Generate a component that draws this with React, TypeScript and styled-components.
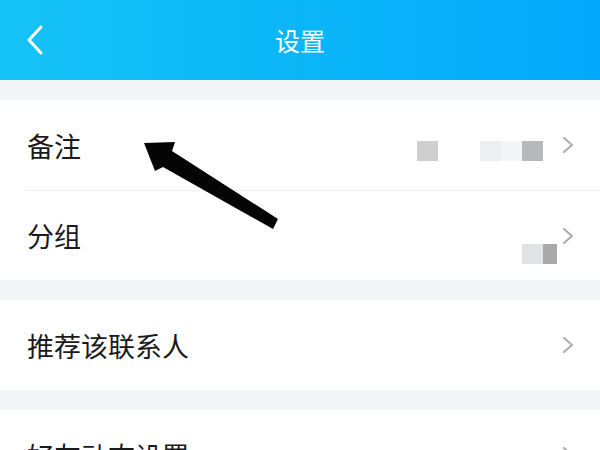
import React from 'react'
import styled, { createGlobalStyle } from 'styled-components'

const GlobalStyle = createGlobalStyle`
  html, body {
    margin: 0;
    padding: 0;
    background: #ffffff;
  }
  body {
    font-family: 'Noto Sans CJK SC', 'Noto Sans', sans-serif;
  }
`

const Screen = styled.div`
  position: relative;
  width: 600px;
  height: 450px;
  overflow: hidden;
  background: #f4f5f8;
`

const Header = styled.header`
  height: 80px;
  display: grid;
  grid-template-columns: 80px 1fr 80px;
  align-items: center;
  background: linear-gradient(90deg, #16c3f6 0%, #0bb6f8 50%, #02a8fb 100%);
  color: #ffffff;
`

const BackButton = styled.div`
  display: flex;
  align-items: center;
  padding-left: 26px;
  height: 100%;
`

const Title = styled.h1`
  margin: 0;
  text-align: center;
  font-size: 25px;
  font-weight: 400;
  letter-spacing: 0;
`

const Group = styled.section`
  background: #ffffff;
  margin-top: 20px;
`

const Row = styled.div`
  height: 90px;
  display: flex;
  align-items: center;
  padding: 0 26px 0 27px;
  position: relative;

  & + & {
    border-top: 1px solid #efefef;
    margin-left: 25px;
    padding-left: 2px;
    height: 89px;
  }
`

const Label = styled.span`
  flex: 1;
  font-size: 27px;
  color: #1a1a1a;
  line-height: 1;
`

const Value = styled.div<{ $offset?: number; $space?: number }>`
  display: flex;
  align-items: center;
  margin-right: ${p => p.$space ?? 19}px;
  transform: translateY(${p => p.$offset ?? 0}px);
`

const Pixel = styled.span<{ $color: string; $w?: number; $gap?: number }>`
  display: block;
  width: ${p => p.$w ?? 21}px;
  height: 20px;
  background: ${p => p.$color};
  margin-left: ${p => p.$gap ?? 0}px;
`

const Chevron = styled.svg`
  width: 12px;
  height: 18px;
  flex: none;
`

const Arrow = styled.svg`
  position: absolute;
  left: 0;
  top: 0;
  width: 600px;
  height: 450px;
  pointer-events: none;
`

const RightChevron = () => (
  <Chevron viewBox='0 0 12 18'>
    <path d='M2 2 L10 9 L2 16' fill='none' stroke='#ababab' strokeWidth='2' strokeLinecap='round' strokeLinejoin='round' />
  </Chevron>
)

const App: React.FC = () => {
  return (
    <>
      <GlobalStyle />
      <Screen>
        <Header>
          <BackButton>
            <svg width='18' height='32' viewBox='0 0 18 32'>
              <path d='M15 3 L3 16 L15 29' fill='none' stroke='#ffffff' strokeWidth='3' strokeLinecap='round' strokeLinejoin='round' />
            </svg>
          </BackButton>
          <Title>设置</Title>
          <div />
        </Header>

        <Group>
          <Row>
            <Label>备注</Label>
            <Value $offset={6}>
              <Pixel $color='#cfcfcf' />
              <Pixel $color='#eceef2' $gap={42} />
              <Pixel $color='#f5f5f7' />
              <Pixel $color='#b7b8bc' />
            </Value>
            <RightChevron />
          </Row>
          <Row>
            <Label>分组</Label>
            <Value $offset={18} $space={5}>
              <Pixel $color='#e1e3e7' />
              <Pixel $color='#a9a9a9' $w={14} />
            </Value>
            <RightChevron />
          </Row>
        </Group>

        <Group>
          <Row>
            <Label>推荐该联系人</Label>
            <RightChevron />
          </Row>
        </Group>

        <Group>
          <Row>
            <Label>好友动态设置</Label>
            <RightChevron />
          </Row>
        </Group>

        <Arrow viewBox='0 0 600 450'>
          <polygon
            points='144,143 175,142 172,151 278,219 273,229 163,167 155,171'
            fill='#050505'
          />
        </Arrow>
      </Screen>
    </>
  )
}

export default App
